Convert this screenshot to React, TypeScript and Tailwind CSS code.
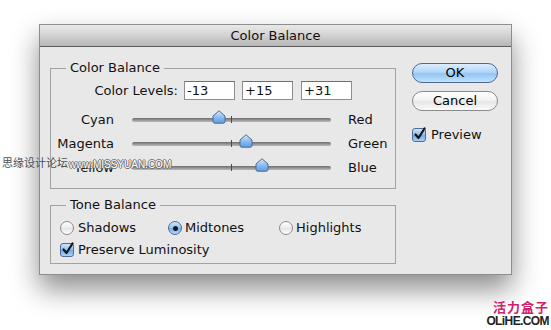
const sliders = [
  { left: "Cyan", right: "Red", value: -13 },
  { left: "Magenta", right: "Green", value: 15 },
  { left: "Yellow", right: "Blue", value: 31 },
];

function Check() {
  return (
    <span className="relative flex h-[14px] w-[14px] shrink-0 items-center justify-center rounded-[3px] border border-[#4d6d96] bg-[linear-gradient(#cfe3fa,#8dbdf1_50%,#6ea9ea_51%,#a9d2fb)]">
      <svg width="14" height="14" viewBox="0 0 14 14" className="absolute -top-[2px] left-0">
        <path d="M2.5 7.5 L5.5 11 L11.5 1.5" fill="none" stroke="#151515" strokeWidth="2.2" strokeLinecap="round" strokeLinejoin="round" />
      </svg>
    </span>
  );
}

function Radio({ on }: { on?: boolean }) {
  if (on) {
    return (
      <span className="flex h-[14px] w-[14px] shrink-0 items-center justify-center rounded-full border border-[#4d6d96] bg-[linear-gradient(#d3e6fb,#92c1f2_50%,#74adeb_51%,#b3d8fc)]">
        <span className="h-[5px] w-[5px] rounded-full bg-[#1a1a1a]" />
      </span>
    );
  }
  return (
    <span className="h-[14px] w-[14px] shrink-0 rounded-full border border-[#8c8c8c] bg-[linear-gradient(#fdfdfd,#ececec_50%,#e2e2e2_51%,#ffffff)]" />
  );
}

function Slider({ value }: { value: number }) {
  const x = ((value + 100) / 200) * 199;
  return (
    <div className="relative h-[24px] w-[199px]">
      <div className="absolute left-0 right-0 top-[10px] h-[4px] rounded-full bg-[linear-gradient(#6c6c6c,#9c9c9c_60%,#b9b9b9)]" />
      <div className="absolute left-[99px] top-[8px] h-[7px] w-px bg-[#4a4a4a]" />
      <svg
        width="14"
        height="14"
        viewBox="0 0 14 14"
        className="absolute top-[2px]"
        style={{ left: x - 7 }}
      >
        <defs>
          <linearGradient id={`th${value}`} x1="0" y1="0" x2="0" y2="1">
            <stop offset="0" stopColor="#dbe9fb" />
            <stop offset="0.5" stopColor="#8fbdf0" />
            <stop offset="1" stopColor="#5d9be4" />
          </linearGradient>
        </defs>
        <path
          d="M7 0.8 L13 6 V11.5 Q13 13.2 11.3 13.2 H2.7 Q1 13.2 1 11.5 V6 Z"
          fill={`url(#th${value})`}
          stroke="#4b6a92"
          strokeWidth="1"
        />
      </svg>
    </div>
  );
}

export default function App() {
  return (
    <div className="relative h-[330px] w-[551px] overflow-hidden bg-white pl-[39px] pt-[24px] font-['DejaVu_Sans','Noto_Sans_CJK_SC',sans-serif] text-[13px] leading-[16px] text-[#111]">
      <div className="h-[251px] w-[473px] border border-[#8d8d8d] bg-[#e8e8e8] shadow-[0_14px_26px_rgba(0,0,0,0.45)]">
        <div className="flex h-[22px] items-center justify-center border-b border-[#5a5a5a] bg-[linear-gradient(#e9e9e9,#d2d2d2_50%,#b6b6b6)] text-[13px]">
          Color Balance
        </div>

        <div className="flex pl-[10px]">
          <div className="w-[346px] pt-[13px]">
            <fieldset className="border border-[#a2a2a2] px-0 pb-[8px] pt-[5px]">
              <legend className="ml-[15px] px-[4px] leading-[16px]">Color Balance</legend>
              <div className="flex h-[19px] items-center">
                <span className="w-[127px] text-right">Color Levels:</span>
                <input readOnly value="-13" className="ml-[6px] h-[19px] w-[51px] border border-[#8e8e8e] border-t-[#6e6e6e] bg-white px-[2px] text-[13px] outline-none" />
                <input readOnly value="+15" className="ml-[7px] h-[19px] w-[51px] border border-[#8e8e8e] border-t-[#6e6e6e] bg-white px-[2px] text-[13px] outline-none" />
                <input readOnly value="+31" className="ml-[8px] h-[19px] w-[51px] border border-[#8e8e8e] border-t-[#6e6e6e] bg-white px-[2px] text-[13px] outline-none" />
              </div>
              <div className="mt-[8px] flex flex-col">
                {sliders.map((s) => (
                  <div key={s.left} className="flex h-[24px] items-center">
                    <span className="w-[63px] text-right">{s.left}</span>
                    <div className="ml-[18px]">
                      <Slider value={s.value} />
                    </div>
                    <span className="ml-[17px]">{s.right}</span>
                  </div>
                ))}
              </div>
            </fieldset>

            <fieldset className="mt-[8px] border border-[#a2a2a2] pb-[5px] pl-[9px] pt-[7px]">
              <legend className="ml-[6px] px-[4px] leading-[16px]">Tone Balance</legend>
              <div className="flex h-[16px] items-center">
                <label className="flex w-[108px] items-center gap-[4px]">
                  <Radio />
                  <span>Shadows</span>
                </label>
                <label className="flex w-[111px] items-center gap-[3px]">
                  <Radio on />
                  <span>Midtones</span>
                </label>
                <label className="flex items-center gap-[3px]">
                  <Radio />
                  <span>Highlights</span>
                </label>
              </div>
              <label className="mt-[6px] flex h-[16px] items-center gap-[4px]">
                <Check />
                <span>Preserve Luminosity</span>
              </label>
            </fieldset>
          </div>

          <div className="ml-[16px] flex w-[86px] flex-col pt-[16px]">
            <button className="h-[20px] rounded-full border border-[#4a6a93] bg-[linear-gradient(#dcedfd,#b3d6f8_45%,#93c4f4_55%,#c4e2fd)] text-[13px] leading-[16px] text-black">
              OK
            </button>
            <button className="mt-[8px] h-[20px] rounded-full border border-[#8a8a8a] bg-[linear-gradient(#ffffff,#f3f3f3_45%,#e6e6e6_55%,#fbfbfb)] text-[13px] leading-[16px] text-black">
              Cancel
            </button>
            <label className="mt-[17px] flex h-[14px] items-center gap-[5px]">
              <Check />
              <span>Preview</span>
            </label>
          </div>
        </div>
      </div>

      <div className="absolute left-[2px] top-[157px] flex items-end">
        <span className="text-[11px] leading-[13px] text-[#505050]">思缘设计论坛</span>
        <span className="ml-[1px] font-['Liberation_Sans',sans-serif] text-[10px] leading-[11px] text-white [text-shadow:1px_0_#707070,-1px_0_#707070,0_1px_#707070,0_-1px_#707070]">
          www.MISSYUAN.COM
        </span>
      </div>

      <div className="absolute right-[2px] top-[301px] flex flex-col items-end">
        <span className="text-[13px] font-bold leading-[14px] tracking-[1px] text-[#d3206b]">活力盒子</span>
        <span className="font-['Liberation_Sans',sans-serif] text-[12px] font-bold leading-[13px] tracking-[-0.6px] text-[#222]">
          OLiHE.COM
        </span>
      </div>
    </div>
  );
}
